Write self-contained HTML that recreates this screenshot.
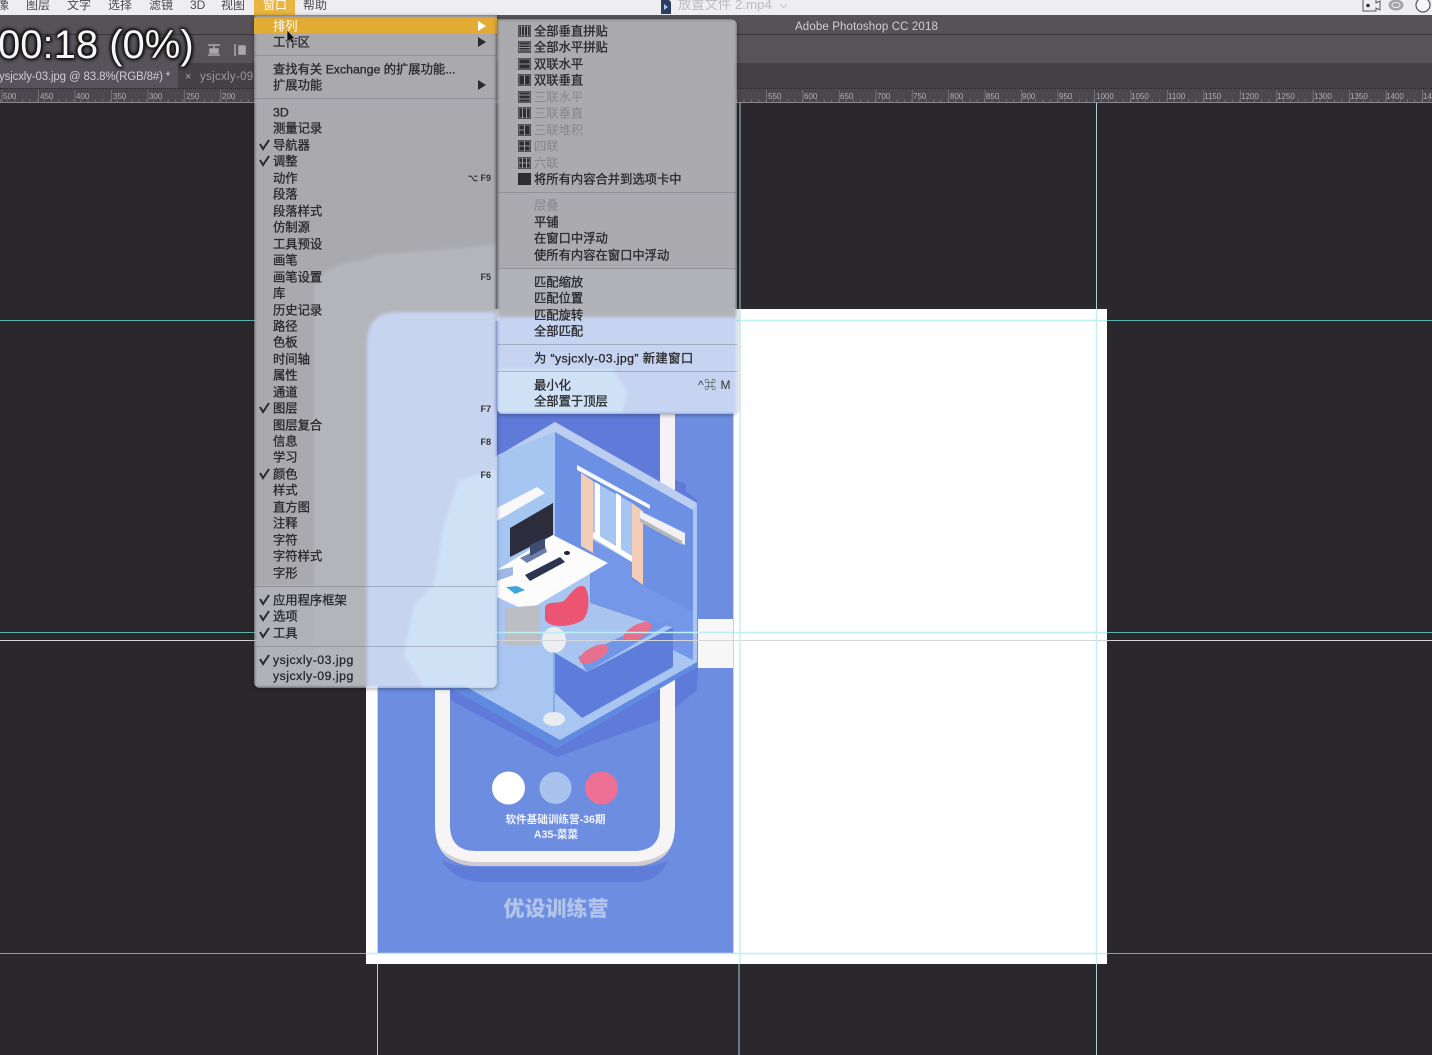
<!DOCTYPE html>
<html lang="zh"><head><meta charset="utf-8"><title>Photoshop</title>
<style>
html,body{margin:0;padding:0;width:1432px;height:1055px;overflow:hidden;background:#2a282d}
body{position:relative;font-family:"Liberation Sans","Noto Sans CJK SC",sans-serif;font-size:12px;color:#28282a}
.a{position:absolute}
.mb{position:absolute;top:-3px;line-height:16px;color:#4a4a4c;white-space:nowrap}
.menu{position:absolute;overflow:hidden;box-shadow:0 1px 4px rgba(0,0,0,.35)}
.menu svg.bg{position:absolute;left:0;top:0;filter:blur(1.5px)}
.r{position:absolute;line-height:16px;height:16px;font-size:12.3px;white-space:nowrap;color:#29292c;-webkit-text-stroke:.3px #29292c;transform:translateY(.5px)}
#m1 .r{margin-left:1px}
.d{color:#87878c;-webkit-text-stroke:0}
.l{letter-spacing:.5px;transform:none}
.k{position:absolute;right:6px;font-size:9px;line-height:12px;color:#333;font-weight:bold;white-space:nowrap}
.sep{position:absolute;left:0;right:0;height:1px;background:rgba(110,110,125,.4)}
.t{position:absolute;line-height:14px;font-size:8px;color:#b0afb2;top:90px}
</style></head><body>

<!-- top chrome -->
<div class="a" style="left:0;top:0;width:1432px;height:15px;background:#eeeef1"></div>
<div class="a" style="left:0;top:15px;width:1432px;height:19px;background:#565358"></div>
<div class="a" style="left:0;top:34px;width:1432px;height:1px;background:#38363a"></div>
<div class="a" style="left:0;top:35px;width:1432px;height:28px;background:#575459"></div>
<div class="a" style="left:0;top:63px;width:1432px;height:25px;background:#444246"></div>
<div class="a" style="left:0;top:63px;width:178px;height:25px;background:#56535a"></div>
<div class="a" style="left:0;top:88px;width:1432px;height:15px;background:#4a484c;border-top:1px dotted #29272b;border-bottom:1px solid #8a888c;box-sizing:border-box"></div>

<div class="mb" style="left:-3px">像</div>
<div class="mb" style="left:26px">图层</div>
<div class="mb" style="left:67px">文字</div>
<div class="mb" style="left:108px">选择</div>
<div class="mb" style="left:149px">滤镜</div>
<div class="mb" style="left:190px">3D</div>
<div class="mb" style="left:221px">视图</div>
<div class="a" style="left:254px;top:0;width:41px;height:15px;background:#e9b440"></div>
<div class="mb" style="left:263px;color:#fff">窗口</div>
<div class="mb" style="left:303px">帮助</div>
<div class="mb" style="left:678px;color:#bdbdc0;font-size:13.300px">放置文件 2.mp4</div>
<svg class="a" style="left:660px;top:0" width="12" height="14"><path d="M1 0H9L11 2V14H1Z" fill="#2a3f63"/><path d="M4 4L8 7L4 10Z" fill="#a9c4ee"/></svg>
<svg class="a" style="left:779px;top:2" width="9" height="8"><path d="M1 2L4.500 5.500L8 2" fill="none" stroke="#c8c8cb" stroke-width="1.200"/></svg>
<svg class="a" style="left:1360px;top:0" width="72" height="14">
<path d="M3 0V11H16V8L20 10V1L16 3V0" fill="none" stroke="#555" stroke-width="1"/><circle cx="8" cy="5.500" r="1.800" fill="#333"/>
<ellipse cx="36" cy="5" rx="7.500" ry="5.500" fill="#a5a5a8"/><ellipse cx="36" cy="5" rx="4" ry="2.500" fill="none" stroke="#eee" stroke-width="1"/>
<circle cx="63" cy="5" r="7" fill="#f6f6f7" stroke="#555" stroke-width="1.200"/>
</svg>
<div class="a" style="left:795px;top:20px;line-height:14px;font-size:11.500px;color:#cfced1;letter-spacing:.13px;white-space:nowrap">Adobe Photoshop CC 2018</div>

<!-- option bar icons -->
<svg class="a" style="left:200px;top:38px" width="54" height="24">
<path d="M8 7H20M14 7V11M10 11H18V15H10ZM8 17H20" stroke="#a9a7ab" stroke-width="1.500" fill="#a9a7ab"/>
<path d="M35 6V18M39 8H45V16H39Z" stroke="#a9a7ab" stroke-width="1.500" fill="#a9a7ab"/>
</svg>

<!-- tabs -->
<div class="a" style="left:-1px;top:70px;line-height:14px;font-size:11.500px;letter-spacing:-.15px;color:#cfced1;white-space:nowrap">ysjcxly-03.jpg @ 83.8%(RGB/8#) *</div>
<div class="a" style="left:185px;top:70px;line-height:14px;font-size:11px;color:#aaa8ac">×</div>
<div class="a" style="left:200px;top:70px;line-height:14px;font-size:11.500px;letter-spacing:.3px;color:#9c9a9e;white-space:nowrap">ysjcxly-09</div>

<!-- ruler -->
<svg class="a" style="left:0;top:88px" width="1432" height="15">
<path d="M2 2V14M38.500 2V14M75 2V14M111.400 2V14M147.900 2V14M184.300 2V14M220.800 2V14M766.400 2V14M802.900 2V14M839.300 2V14M875.800 2V14M912.200 2V14M948.700 2V14M985.100 2V14M1021.600 2V14M1058 2V14M1094.500 2V14M1131 2V14M1167.400 2V14M1203.900 2V14M1240.300 2V14M1276.800 2V14M1313.200 2V14M1349.700 2V14M1386.100 2V14M1422.600 2V14" stroke="#7d7b7f" stroke-width=".8"/>
<path d="M0 12.500H1432" stroke="#7d7b7f" stroke-width="2" stroke-dasharray="1 6.290"/>
</svg>
<span class="t" style="left:3px">500</span><span class="t" style="left:40px">450</span><span class="t" style="left:76px">400</span><span class="t" style="left:113px">350</span><span class="t" style="left:149px">300</span><span class="t" style="left:186px">250</span><span class="t" style="left:222px">200</span>
<span class="t" style="left:768px">550</span><span class="t" style="left:804px">600</span><span class="t" style="left:840px">650</span><span class="t" style="left:877px">700</span><span class="t" style="left:913px">750</span><span class="t" style="left:950px">800</span><span class="t" style="left:986px">850</span><span class="t" style="left:1022px">900</span><span class="t" style="left:1059px">950</span><span class="t" style="left:1096px">1000</span><span class="t" style="left:1131px">1050</span><span class="t" style="left:1168px">1100</span><span class="t" style="left:1204px">1150</span><span class="t" style="left:1241px">1200</span><span class="t" style="left:1277px">1250</span><span class="t" style="left:1314px">1300</span><span class="t" style="left:1350px">1350</span><span class="t" style="left:1386px">1400</span><span class="t" style="left:1423px">14</span>

<!-- canvas and artwork -->
<svg class="a" style="left:0;top:103px" width="1432" height="952" viewBox="0 103 1432 952">
<rect x="366" y="309" width="741" height="655" fill="#fff"/>
<rect x="377" y="320" width="356" height="633" fill="#6d8de1"/>
<!-- room shadow -->
<path d="M440 414H660V470L697 500V690L660 720L557 757L450 700Z" fill="#5f7ad8"/>
<path d="M675 480L686 484V690L675 700Z" fill="#5f7ad8"/>
<path d="M675 668H698V680L675 700Z" fill="#5f7ad8"/>
<!-- phone frame -->
<path d="M435 690H450V825Q450 851 476 851H634Q660 851 660 825V670H675V825Q675 865 635 865H475Q435 865 435 825Z" fill="#f6f4f5"/>
<path d="M437 842Q448 866 475 866H635Q662 866 673 842Q664 860 635 862H475Q446 860 437 842Z" fill="#cfcbd0"/>
<path d="M442 860Q452 880 480 882H640Q662 878 668 860Q660 866 635 867H475Q450 866 442 860Z" fill="#607cd9"/>
<rect x="660" y="414" width="15" height="76" fill="#f4f2f4"/>
<rect x="698" y="619" width="35" height="49" fill="#f8f7f8"/>
<!-- room -->
<path d="M555 422L697 503V667L557 748L440 682V490Z" fill="#a9c5f1"/>
<path d="M557 748L697 667V662L560 740L440 672V682Z" fill="#5f8ae0"/>
<path d="M555 422L697 503L693 510L555 432L440 497V490Z" fill="#bccdf0"/>
<path d="M555 432L693 510V660L673 650V627L650 623L590 603V570H555Z" fill="#6c90e4"/>
<path d="M593 540L632 562V580L693 612V660L673 650V627L650 623L590 603Z" fill="#7498e7"/>
<path d="M555 653L587 672L673 627V667L582 718L555 693Z" fill="#5e7dda"/>
<path d="M590 603L650 623L578 657L563 653L540 640L555 610Z" fill="#a9c4ee"/>
<path d="M578 657L650 623L672 622L587 672Z" fill="#7196e8"/>
<ellipse cx="594" cy="654" rx="16" ry="7" transform="rotate(-28 594 654)" fill="#e8708f"/>
<ellipse cx="637" cy="632" rx="16" ry="7" transform="rotate(-30 637 632)" fill="#e8708f"/>
<!-- left wall -->
<path d="M497 455L555 432V540L497 570Z" fill="#a6c6f2"/>
<!-- window -->
<path d="M582 475L632 503V562L582 534Z" fill="#a7c5f2"/>
<path d="M595 482L600 485V538L595 535ZM616 493L621 496V551L616 548Z" fill="#fff"/>
<path d="M593 538L632 562V556L593 532Z" fill="#fff"/>
<path d="M581 473L593 481V553L581 546ZM632 503L643 511V585L632 577Z" fill="#f3cdb8"/>
<path d="M577 465L650 505V509L577 470Z" fill="#f6f7fb"/>
<path d="M640 511L685 533V545L640 522Z" fill="#f0f0f3"/>
<path d="M640 518L682 541V545L640 522Z" fill="#b5b6bb"/>
<!-- shelf, monitor, desk -->
<path d="M497 508L537 487L545 493L497 521Z" fill="#f8f8fa"/>
<path d="M510 528L553 503V535L510 557Z" fill="#2b2d3c"/>
<path d="M553 535L608 563L527 611L497 597V570Z" fill="#fcfcfd"/>
<path d="M520 558L545 546L547 552L527 563Z" fill="#6c80ab"/>
<path d="M530 545L545 538V548L530 556Z" fill="#3f4b70"/>
<path d="M525 575L560 557L565 562L530 581Z" fill="#2d3350"/>
<ellipse cx="567" cy="553" rx="3" ry="2" fill="#222"/>
<path d="M506 587L517 586L525 590L515 594Z" fill="#3fa6dc"/>
<path d="M497 570L513 567V575L497 581Z" fill="#9fb7e3"/>
<path d="M505 608L540 605V645H505Z" fill="#bdbec4"/>
<path d="M545 607C548 600 558 605 565 600C572 592 578 583 585 587C590 595 590 612 583 620C570 628 550 628 545 620Z" fill="#ec5572"/>
<ellipse cx="554" cy="640" rx="12" ry="13" fill="#eceef2"/>
<path d="M553 652H555V712H553Z" fill="#7fb0e6"/>
<ellipse cx="554" cy="719" rx="11" ry="7" fill="#e9ecf2"/>
<!-- circles and labels -->
<circle cx="508.500" cy="788" r="16.500" fill="#fff"/>
<circle cx="555.500" cy="788" r="16" fill="#a9c2ee"/>
<circle cx="601.500" cy="788" r="16.500" fill="#ee7195"/>
<text x="555.500" y="823" text-anchor="middle" font-size="10.600" font-weight="700" fill="#eef2fb" font-family="'Liberation Sans','Noto Sans CJK SC',sans-serif">软件基础训练营-36期</text>
<text x="556" y="838" text-anchor="middle" font-size="10.600" font-weight="700" fill="#eef2fb" font-family="'Liberation Sans','Noto Sans CJK SC',sans-serif">A35-菜菜</text>
<text x="556" y="916" text-anchor="middle" font-size="21" font-weight="900" fill="#b3c4ea" font-family="'Noto Sans CJK SC',sans-serif">优设训练营</text>
<!-- guides -->
<path d="M0 320.500H366M1107 320.500H1432M0 632.500H366M1107 632.500H1432M0 953.500H366M1107 953.500H1432" stroke="#5cb4ad" stroke-width="1"/>
<path d="M366 320.500H1107M366 632.500H1107M366 953.500H1107" stroke="#bdeef0" stroke-width="1.500"/>
<path d="M0 640.500H1432" stroke="#d4d6d8" stroke-width="1"/>
<path d="M377.500 964V1055M740 103V309M739 964V1055M1096.500 103V309M1096.500 964V1055" stroke="#a5d4d2" stroke-width="1"/>
<path d="M377.500 309V953M733.500 309V953" stroke="#a9e3e8" stroke-width="1"/>
<path d="M740 309V964M1096.500 309V964" stroke="#c7eef1" stroke-width="1.500"/>
</svg>

<!-- window menu -->
<div class="menu" id="m1" style="left:254px;top:15px;width:243px;height:673px;border-radius:0 0 6px 6px">
<svg class="bg" width="243" height="673">
<rect width="243" height="673" fill="#aaaaae"/>
<path d="M60 673V270C80 240 110 250 120 240L243 230V673Z" fill="#b4b5ba"/>
<path d="M113 673V330C113 305 125 297 145 297H243V673Z" fill="#c7d4f0"/>
<path d="M0 571H110V673H0Z" fill="#b3b5bb" opacity=".7"/>
<path d="M243 455L205 465L190 510L180 570L160 590L150 640L170 673H243Z" fill="#cfe2f5"/>
</svg>
<div class="a" style="left:0;top:3px;width:243px;height:16px;background:#e2ab33"></div>
<div class="r" style="left:18px;top:3px;color:#fff;-webkit-text-stroke:0">排列</div>
<div class="r" style="left:18px;top:19px">工作区</div>
<div class="sep" style="top:40px"></div>
<div class="r" style="left:18px;top:46px">查找有关 Exchange 的扩展功能...</div>
<div class="r" style="left:18px;top:62px">扩展功能</div>
<div class="sep" style="top:83px"></div>
<div class="r" style="left:18px;top:89px">3D</div>
<div class="r" style="left:18px;top:105px">测量记录</div>
<div class="r" style="left:18px;top:122px">导航器</div>
<div class="r" style="left:18px;top:138px">调整</div>
<div class="r" style="left:18px;top:155px">动作</div>
<div class="r" style="left:18px;top:171px">段落</div>
<div class="r" style="left:18px;top:188px">段落样式</div>
<div class="r" style="left:18px;top:204px">仿制源</div>
<div class="r" style="left:18px;top:221px">工具预设</div>
<div class="r" style="left:18px;top:237px">画笔</div>
<div class="r" style="left:18px;top:254px">画笔设置</div>
<div class="r" style="left:18px;top:270px">库</div>
<div class="r" style="left:18px;top:287px">历史记录</div>
<div class="r" style="left:18px;top:303px">路径</div>
<div class="r" style="left:18px;top:319px">色板</div>
<div class="r" style="left:18px;top:336px">时间轴</div>
<div class="r" style="left:18px;top:352px">属性</div>
<div class="r" style="left:18px;top:369px">通道</div>
<div class="r" style="left:18px;top:385px">图层</div>
<div class="r" style="left:18px;top:402px">图层复合</div>
<div class="r" style="left:18px;top:418px">信息</div>
<div class="r" style="left:18px;top:434px">学习</div>
<div class="r" style="left:18px;top:451px">颜色</div>
<div class="r" style="left:18px;top:467px">样式</div>
<div class="r" style="left:18px;top:484px">直方图</div>
<div class="r" style="left:18px;top:500px">注释</div>
<div class="r" style="left:18px;top:517px">字符</div>
<div class="r" style="left:18px;top:533px">字符样式</div>
<div class="r" style="left:18px;top:550px">字形</div>
<div class="sep" style="top:571px"></div>
<div class="r" style="left:18px;top:577px">应用程序框架</div>
<div class="r" style="left:18px;top:593px">选项</div>
<div class="r" style="left:18px;top:610px">工具</div>
<div class="sep" style="top:631px"></div>
<div class="r l" style="left:18px;top:637px">ysjcxly-03.jpg</div>
<div class="r l" style="left:18px;top:653px">ysjcxly-09.jpg</div>
<div class="k" style="top:157px">⌥ F9</div>
<div class="k" style="top:256px">F5</div>
<div class="k" style="top:388px">F7</div>
<div class="k" style="top:421px">F8</div>
<div class="k" style="top:454px">F6</div>
<svg class="a" style="left:0;top:0" width="243" height="673">
<path d="M224 6L232 11L224 16Z" fill="#fff"/>
<path d="M224 22L232 27L224 32ZM224 65L232 70L224 75Z" fill="#2a2a2c"/>
<g fill="none" stroke="#2b2b2e" stroke-width="2">
<path d="M6 129L9 134L15 125"/><path d="M6 145L9 150L15 141"/><path d="M6 392L9 397L15 388"/><path d="M6 458L9 463L15 454"/><path d="M6 584L9 589L15 580"/><path d="M6 600L9 605L15 596"/><path d="M6 617L9 622L15 613"/><path d="M6 644L9 649L15 640"/>
</g>
<path d="M33 15V27L36 24.500L38 28.500L40 27.500L38 23.500L41 23.500Z" fill="#111" stroke="#ddd" stroke-width=".5"/>
</svg>
</div>

<!-- arrange submenu -->
<div class="menu" style="left:497px;top:19px;width:240px;height:395px;border-radius:0 6px 6px 6px">
<svg class="bg" width="240" height="395">
<rect width="240" height="395" fill="#ababaf"/>
<rect y="250" width="240" height="48" fill="#b2b3b8"/>
<rect y="298" width="240" height="97" fill="#c6d4f1"/>
<path d="M0 350H115L130 372L125 395H0Z" fill="#cfe2f5"/>
</svg>
<svg class="a" style="left:21px;top:0" width="13" height="170" fill="none">
<g fill="#2e2e31"><rect y="6" width="13" height="12"/><rect y="22" width="13" height="12"/><rect y="39" width="13" height="12"/><rect y="55" width="13" height="12"/><rect y="72" width="13" height="12"/><rect y="88" width="13" height="12"/><rect y="105" width="13" height="12"/><rect y="121" width="13" height="12"/><rect y="138" width="13" height="12"/><rect y="154" width="13" height="12"/></g>
<g stroke="#a0a0a4" stroke-width=".7">
<rect x="1" y="7" width="11" height="10"/><rect x="1" y="23" width="11" height="10"/><rect x="1" y="40" width="11" height="10"/><rect x="1" y="56" width="11" height="10"/><rect x="1" y="73" width="11" height="10"/><rect x="1" y="89" width="11" height="10"/><rect x="1" y="106" width="11" height="10"/><rect x="1" y="122" width="11" height="10"/><rect x="1" y="139" width="11" height="10"/>
</g>
<g stroke="#b5b5b9" stroke-width=".8">
<path d="M3.500 7V17M6.500 7V17M9.500 7V17"/>
<path d="M1 26H12M1 28.500H12M1 31H12"/>
<path d="M1 45H12"/>
<path d="M6.500 56V66"/>
<path d="M1 76H12M1 80H12"/>
<path d="M4.500 89V99M8.500 89V99"/>
<path d="M6.500 106V116M1 111H6"/>
<path d="M6.500 122V132M1 127H12"/>
<path d="M4.500 139V149M8.500 139V149M1 144H12"/>
</g></svg>
<div class="r" style="left:37px;top:4px">全部垂直拼贴</div>
<div class="r" style="left:37px;top:20px">全部水平拼贴</div>
<div class="r" style="left:37px;top:37px">双联水平</div>
<div class="r" style="left:37px;top:53px">双联垂直</div>
<div class="r d" style="left:37px;top:70px">三联水平</div>
<div class="r d" style="left:37px;top:86px">三联垂直</div>
<div class="r d" style="left:37px;top:103px">三联堆积</div>
<div class="r d" style="left:37px;top:119px">四联</div>
<div class="r d" style="left:37px;top:136px">六联</div>
<div class="r" style="left:37px;top:152px">将所有内容合并到选项卡中</div>
<div class="sep" style="top:173px"></div>
<div class="r d" style="left:37px;top:178px">层叠</div>
<div class="r" style="left:37px;top:195px">平铺</div>
<div class="r" style="left:37px;top:211px">在窗口中浮动</div>
<div class="r" style="left:37px;top:228px">使所有内容在窗口中浮动</div>
<div class="sep" style="top:249px"></div>
<div class="r" style="left:37px;top:255px">匹配缩放</div>
<div class="r" style="left:37px;top:271px">匹配位置</div>
<div class="r" style="left:37px;top:288px">匹配旋转</div>
<div class="r" style="left:37px;top:304px">全部匹配</div>
<div class="sep" style="top:325px"></div>
<div class="r" style="left:37px;top:331px;letter-spacing:.4px">为 “ysjcxly-03.jpg” 新建窗口</div>
<div class="sep" style="top:352px"></div>
<div class="r" style="left:37px;top:358px">最小化</div>
<div class="r" style="left:37px;top:374px">全部置于顶层</div>
<div class="a" style="right:6px;top:358px;line-height:16px;font-size:12px;letter-spacing:.5px;color:#333;white-space:nowrap">^⌘ M</div>
</div>

<!-- timer overlay -->
<div class="a" style="left:-2px;top:19px;line-height:52px;font-size:40px;color:#f6f6f6;white-space:nowrap;text-shadow:0 0 3px #111,0 0 3px #111,0 0 4px #111,1px 1px 3px #111,-1px -1px 3px #111">00:18 (0%)</div>
</body></html>
